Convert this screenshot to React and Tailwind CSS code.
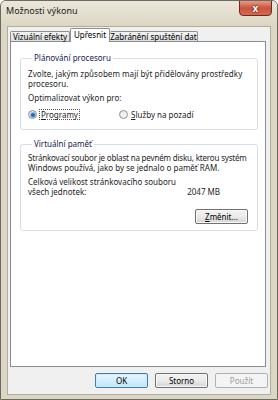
import React from "react";

const F = { fontFamily: '"Noto Sans", "Open Sans", sans-serif' };

function Radio({ checked }) {
  return (
    <span className="inline-block w-[9px] h-[9px] rounded-full border border-[#8e8f8f] bg-gradient-to-br from-[#e6e6e6] to-[#fbfbfb] relative shrink-0">
      {checked && (
        <span className="absolute left-[1.5px] top-[1.5px] w-[4px] h-[4px] rounded-full bg-[#2a6bb3] shadow-[0_0_1px_1px_#86b7e8]" />
      )}
    </span>
  );
}

function Btn({ children, w = "w-[53px]", variant = "normal" }) {
  const base = "h-[15px] rounded-[2px] flex items-center justify-center text-[8px] leading-none whitespace-nowrap";
  if (variant === "default")
    return (
      <div className={`${w} ${base} border border-[#3c7fb1] bg-gradient-to-b from-[#eaf6fd] to-[#bee6fd] text-black shadow-[inset_0_0_0_1px_#cfeafa]`}>
        {children}
      </div>
    );
  if (variant === "disabled")
    return (
      <div className={`${w} ${base} border border-[#adb2b5] bg-[#f4f4f4] text-[#9c9c9c]`}>{children}</div>
    );
  return (
    <div className={`${w} ${base} border border-[#707070] bg-gradient-to-b from-[#f2f2f2] via-[#ebebeb] to-[#d4d4d4] text-black shadow-[inset_0_0_0_1px_#fafafa]`}>
      {children}
    </div>
  );
}

export default function App() {
  return (
    <div style={F} className="w-[278px] h-[400px] bg-[#dcd7c4] border border-[#6b6a62] rounded-t-[6px] flex flex-col relative overflow-hidden text-black">
      {/* title bar */}
      <div className="h-[25px] flex items-start pl-[5px] pt-[4px] shrink-0 bg-gradient-to-b from-[#ebe7da] to-[#dcd7c4]">
        <span className="text-[9px] leading-[12px] text-[#1c1c1c] whitespace-nowrap">Možnosti výkonu</span>
      </div>
      {/* close button */}
      <div className="absolute left-[238px] top-[-1px] w-[33px] h-[16px] rounded-b-[4px] border border-[#6d2b1e] bg-gradient-to-b from-[#e49b86] via-[#c8543e] to-[#d9694b] flex items-center justify-center">
        <span className="text-white font-bold text-[10px] leading-none [text-shadow:0_0_2px_#3a1208,0_0_1px_#3a1208]">x</span>
      </div>
      {/* client area */}
      <div className="mx-[6px] mb-[4px] flex-1 bg-[#f0f0f0] border border-[#b2ad9b] flex flex-col px-[2px] pt-[1px]">
        {/* tabs */}
        <div className="flex items-end h-[13px] text-[8px] leading-none relative z-10 whitespace-nowrap">
          <div className="h-[10px] w-[60px] flex items-center justify-center border border-b-0 border-[#8e8f8f] bg-gradient-to-b from-[#f2f2f2] to-[#dfdfdf] rounded-t-[2px]">
            Vizuální efekty
          </div>
          <div className="h-[14px] w-[40px] flex items-start pt-[2px] justify-center border border-b-0 border-[#8e8f8f] bg-white rounded-t-[2px] -mb-[1px] relative">
            Upřesnit
          </div>
          <div className="h-[10px] w-[88px] flex items-center justify-center border border-b-0 border-l-0 border-[#8e8f8f] bg-gradient-to-b from-[#f2f2f2] to-[#dfdfdf] rounded-t-[2px]">
            Zabránění spuštění dat
          </div>
        </div>
        {/* panel */}
        <div className="h-[326px] w-[256px] bg-white border border-[#898c95] pl-[9px] pr-[7px] pt-[11px] text-[8px] leading-[10px] whitespace-nowrap">
          <fieldset className="min-w-0 border border-[#d5dfe5] rounded-[3px] h-[77px] pl-[7px] pr-[4px]">
            <legend className="ml-[4px] px-[2px] text-[#151c55] text-[8px] leading-[10px]">Plánování procesoru</legend>
            <div className="pt-[6px] text-[#1e1e1e]">
              <div className="tracking-[0.05px]">Zvolte, jakým způsobem mají být přidělovány prostředky</div>
              <div>procesoru.</div>
              <div className="mt-[4px]">Optimalizovat výkon pro:</div>
              <div className="flex items-center mt-[6px] h-[11px]">
                <div className="w-[91px] flex items-center">
                  <Radio checked />
                  <span className="ml-[2px] border border-dotted border-[#555] px-[1px] leading-[9px]">
                    <span className="underline">P</span>rogramy
                  </span>
                </div>
                <Radio />
                <span className="ml-[3px]">
                  <span className="underline">S</span>lužby na pozadí
                </span>
              </div>
            </div>
          </fieldset>
          <fieldset className="min-w-0 border border-[#d5dfe5] rounded-[3px] h-[92px] mt-[9px] pl-[7px] pr-[9px]">
            <legend className="ml-[4px] px-[2px] text-[#151c55] text-[8px] leading-[10px]">Virtuální paměť</legend>
            <div className="pt-[4px] text-[#1e1e1e]">
              <div className="tracking-[-0.18px]">Stránkovací soubor je oblast na pevném disku, kterou systém</div>
              <div>Windows používá, jako by se jednalo o paměť RAM.</div>
              <div className="mt-[4px]">Celková velikost stránkovacího souboru</div>
              <div className="flex">
                <span>všech jednotek:</span>
                <span className="ml-auto mr-[28px]">2047 MB</span>
              </div>
              <div className="flex justify-end mt-[12px]">
                <Btn>
                  <span><span className="underline">Z</span>měnit...</span>
                </Btn>
              </div>
            </div>
          </fieldset>
        </div>
        {/* buttons */}
        <div className="flex justify-end gap-[7px] mt-[6px]">
          <Btn variant="default">OK</Btn>
          <Btn>Storno</Btn>
          <Btn variant="disabled">Použít</Btn>
        </div>
      </div>
    </div>
  );
}
